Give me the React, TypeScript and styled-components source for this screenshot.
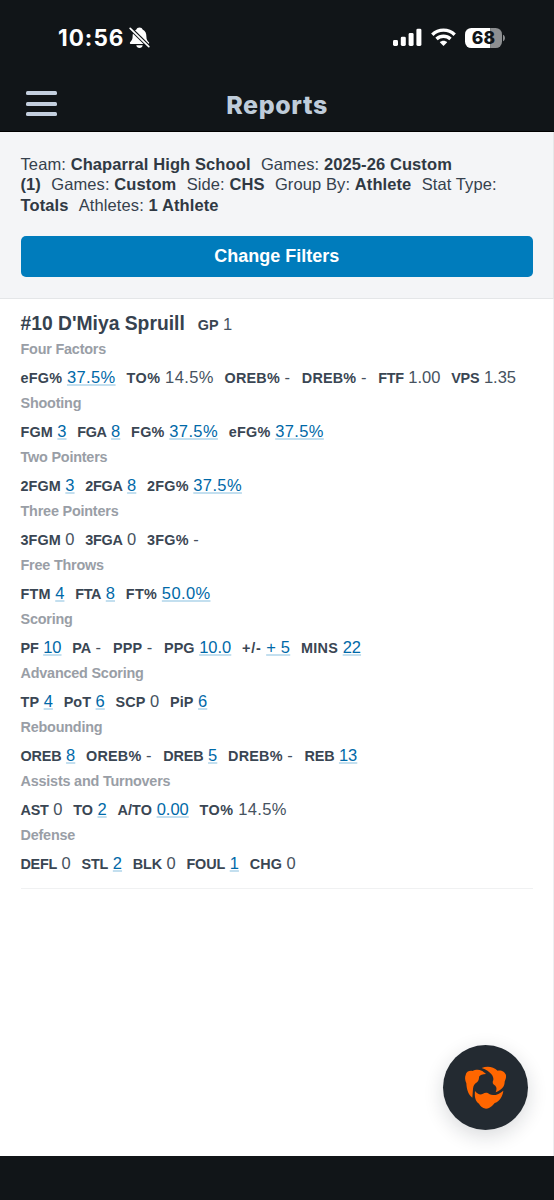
import React from "react";
import styled, { createGlobalStyle } from "styled-components";

const GlobalStyle = createGlobalStyle`
  * { box-sizing: border-box; }
  body { margin: 0; background: #fff; font-family: "Liberation Sans", Arial, sans-serif; }
`;

const Screen = styled.div`
  position: relative;
  display: flex;
  flex-direction: column;
  height: 1200px;
  overflow: hidden;
  background: #fff;
`;

const TopArea = styled.header`
  height: 132px;
  flex: none;
  background: #111518;
  border-bottom: 1px solid #000;
`;

const StatusBar = styled.div`
  display: flex;
  align-items: center;
  height: 75px;
  padding: 0 48px 0 58px;
`;

const Clock = styled.span`
  font: 700 22.5px/28px Inter, sans-serif;
  letter-spacing: 1px;
  width: 67px;
  white-space: nowrap;
  color: #fff;
`;

const StatusIcons = styled.div`
  display: flex;
  align-items: center;
  margin-left: auto;
`;

const BatteryText = styled.text`
  font: 800 17.5px Inter, sans-serif;
`;

const NavBar = styled.div`
  display: grid;
  grid-template-columns: 56px 1fr 56px;
  align-items: center;
  height: 56px;
`;

const MenuButton = styled.button`
  display: flex;
  flex-direction: column;
  justify-content: space-between;
  width: 31px;
  height: 25px;
  margin: 1px 0 0 26px;
  padding: 0;
  border: 0;
  background: none;
`;

const MenuLine = styled.span`
  height: 4px;
  border-radius: 1.5px;
  background: #c4cfde;
`;

const PageTitle = styled.h1`
  margin: 3px 0 0;
  text-align: center;
  font: 800 25px/30px Inter, sans-serif;
  letter-spacing: 0.6px;
  color: #bfccda;
`;

const Filters = styled.section`
  flex: none;
  height: 167px;
  padding: 21.5px 20px 0 20.5px;
  background: #f4f5f7;
  border-bottom: 1px solid #e4e6e8;
  border-right: 1px solid #e6e7e9;
`;

const FilterLine = styled.div`
  display: flex;
  gap: 10.3px;
  height: 20.7px;
  white-space: nowrap;
  font-size: 16.5px;
  letter-spacing: 0.1px;
  line-height: 20.7px;
  color: #36414d;

  b { color: #303943; }
`;

const ChangeButton = styled.button`
  display: block;
  width: 100%;
  height: 41px;
  margin-top: 20px;
  border: 0;
  border-radius: 5px;
  background: #007cbc;
  color: #fff;
  font: 700 18px/41px "Liberation Sans", Arial, sans-serif;
  padding: 0;
`;

const Report = styled.main`
  flex: 1;
  padding: 11.5px 20px 0 20.5px;
  border-right: 1px solid #eeeff1;
`;

const Athlete = styled.div`
  display: flex;
  align-items: baseline;
  gap: 13px;
  height: 28.2px;
  line-height: 25px;
  color: #36424f;
`;

const AthleteName = styled.h2`
  margin: 0;
  font-size: 19.3px;
  line-height: 25px;
`;

const Group = styled.section`
  height: 54.07px;
`;

const GroupTitle = styled.h3`
  margin: 0;
  font-size: 14.4px;
  line-height: 21px;
  letter-spacing: -0.2px;
  color: #999ea6;
`;

const StatRow = styled.div`
  display: flex;
  gap: 10.8px;
  height: 33px;
  line-height: 36px;
  white-space: nowrap;
`;

const Stat = styled.span`
  display: flex;
  align-items: baseline;
  gap: 4.6px;
`;

const StatLabel = styled.span<{ $tracking: number }>`
  font-size: 14.4px;
  font-weight: 700;
  letter-spacing: ${(p) => p.$tracking}em;
  color: #3a4653;
`;

const StatValue = styled.span<{ $linked?: boolean; $tracking: number }>`
  font-size: 16.5px;
  letter-spacing: ${(p) => p.$tracking}em;
  line-height: 18px;
  color: ${(p) => (p.$linked ? "#0069a8" : "#465260")};
  text-decoration: ${(p) => (p.$linked ? "underline 2px #c3dfef" : "none")};
  text-decoration-skip-ink: none;
  text-underline-offset: 1px;
`;

const Divider = styled.div`
  height: 1px;
  margin-top: 8.3px;
  background: #f0f1f2;
`;

const HomeArea = styled.footer`
  flex: none;
  height: 44px;
  background: #111518;
`;

const FloatingButton = styled.button`
  position: absolute;
  right: 26px;
  bottom: 70px;
  display: grid;
  place-items: center;
  width: 85px;
  height: 85px;
  padding: 0;
  border: 0;
  border-radius: 50%;
  background: #232a31;
  box-shadow: 0 6px 20px rgba(20, 25, 35, 0.16);
`;

type StatItem = [label: string, value: string, linked?: boolean];

const groups: { title: string; stats: StatItem[] }[] = [
  { title: "Four Factors", stats: [["eFG%", "37.5%", true], ["TO%", "14.5%"], ["OREB%", "-"], ["DREB%", "-"], ["FTF", "1.00"], ["VPS", "1.35"]] },
  { title: "Shooting", stats: [["FGM", "3", true], ["FGA", "8", true], ["FG%", "37.5%", true], ["eFG%", "37.5%", true]] },
  { title: "Two Pointers", stats: [["2FGM", "3", true], ["2FGA", "8", true], ["2FG%", "37.5%", true]] },
  { title: "Three Pointers", stats: [["3FGM", "0"], ["3FGA", "0"], ["3FG%", "-"]] },
  { title: "Free Throws", stats: [["FTM", "4", true], ["FTA", "8", true], ["FT%", "50.0%", true]] },
  { title: "Scoring", stats: [["PF", "10", true], ["PA", "-"], ["PPP", "-"], ["PPG", "10.0", true], ["+/-", "+ 5", true], ["MINS", "22", true]] },
  { title: "Advanced Scoring", stats: [["TP", "4", true], ["PoT", "6", true], ["SCP", "0"], ["PiP", "6", true]] },
  { title: "Rebounding", stats: [["OREB", "8", true], ["OREB%", "-"], ["DREB", "5", true], ["DREB%", "-"], ["REB", "13", true]] },
  { title: "Assists and Turnovers", stats: [["AST", "0"], ["TO", "2", true], ["A/TO", "0.00", true], ["TO%", "14.5%"]] },
  { title: "Defense", stats: [["DEFL", "0"], ["STL", "2", true], ["BLK", "0"], ["FOUL", "1", true], ["CHG", "0"]] },
];

// Per-letter width corrections, in em, averaged over a word as tracking.
const widthAdjust: Record<string, number> = {
  A: -0.03, B: -0.02, C: 0.019, E: -0.022, F: -0.035, G: -0.019, H: 0.019,
  L: -0.018, M: 0.074, N: 0.019, P: 0.012, S: -0.018, U: 0.019, V: -0.037,
  e: 0.018, "%": 0.111, "-": 0.06, "/": 0.06, "+": 0.04,
};

const trackingFor = (text: string) =>
  [...text].reduce((sum, ch) => sum + (widthAdjust[ch] ?? 0), 0) / text.length;

const StatEntry = ({ label, value, linked }: { label: string; value: string; linked?: boolean }) => (
  <Stat>
    <StatLabel $tracking={trackingFor(label)}>{label}</StatLabel>
    <StatValue $linked={linked} $tracking={trackingFor(value)}>{value}</StatValue>
  </Stat>
);

const SilentBell = () => (
  <svg width="22" height="22" viewBox="0 0 22 22" style={{ marginLeft: 4 }}>
    <path d="M10.5 .6C8.8 .6 7.8 1.4 7.4 2.6C4.6 3.8 3.6 6.5 3.6 9.5C3.6 13 2.1 14 .9 15.5Q.5 17 2 17H19Q20.5 17 20.1 15.5C18.6 14 17.4 13 17.4 9.5C17.4 6.5 16.4 3.8 13.6 2.6C13.2 1.4 12.2 .6 10.5 .6Z" fill="#fff" />
    <path d="M7.3 18.2H13.7C13.4 20 12.2 20.9 10.5 20.9S7.6 20 7.3 18.2Z" fill="#fff" />
    <path d="M1 1L21 20.6" stroke="#111518" strokeWidth="3.8" />
    <path d="M1.2 1.4L19.8 19.6" stroke="#fff" strokeWidth="1.7" strokeLinecap="round" />
  </svg>
);

const Signal = () => (
  <svg width="29" height="19" viewBox="0 0 29 19" fill="#fff">
    <rect x="0" y="12" width="5" height="6" rx="1.4" />
    <rect x="7.8" y="8.7" width="5" height="9.3" rx="1.4" />
    <rect x="15.6" y="5" width="5" height="13" rx="1.4" />
    <rect x="23.4" y="0.7" width="5" height="17.3" rx="1.4" />
  </svg>
);

const Wifi = () => (
  <svg width="25" height="19" viewBox="0 0 25 19" fill="none" stroke="#fff" strokeWidth="3.4" style={{ marginLeft: 9 }}>
    <path d="M1.3 6.7C7.6 .6 17.4 .6 23.7 6.7" />
    <path d="M5.5 11C9.5 7.3 15.5 7.3 19.5 11" />
    <path d="M8.8 14.3C10.8 12.3 14.2 12.3 16.2 14.3L12.5 18Z" fill="#fff" stroke="none" />
  </svg>
);

const Battery = () => (
  <svg width="41" height="20" viewBox="0 0 41 20" style={{ marginLeft: 9 }}>
    <defs>
      <clipPath id="cell"><rect x="0" y="0" width="37" height="20" rx="6.3" /></clipPath>
    </defs>
    <g clipPath="url(#cell)">
      <rect width="25.2" height="20" fill="#fff" />
      <rect x="25.2" width="12" height="20" fill="#8d8f91" />
    </g>
    <path d="M38 6.7C40.6 7.5 40.6 12.5 38 13.3Z" fill="#8d8f91" />
    <BatteryText x="18.4" y="16.3" textAnchor="middle" fill="#111518">68</BatteryText>
  </svg>
);

const HudlLogo = () => (
  <svg width="45" height="45" viewBox="99 105 135 135" fill="#ff6600">
    <path d="M107 135C108 126 118 121 127 123C135 119 146 117 155 122C159 124 164 128 168 132C158 133 150 135 148 139C146 146 148 150 141 157C133 162 130 168 129 176L127 203C116 195 110 180 109 160C105 150 104 142 107 135Z" />
    <path d="M155 114C170 107 190 109 203 122C212 119 226 125 228 136C229 144 226 150 224 155C224 168 218 178 197 187C200 178 201 173 196 167C188 163 186 158 190 150C192 140 183 124 155 114Z" />
    <path d="M135 183C143 194 152 195 159 191C166 186 175 188 179 193C190 199 208 193 220 182C218 200 207 216 194 219C188 226 182 235 168 236C156 234 150 227 147 221C136 214 133 200 135 183Z" />
  </svg>
);

export default function App() {
  return (
    <Screen>
      <GlobalStyle />
      <TopArea>
        <StatusBar>
          <Clock>10:56</Clock>
          <SilentBell />
          <StatusIcons>
            <Signal />
            <Wifi />
            <Battery />
          </StatusIcons>
        </StatusBar>
        <NavBar>
          <MenuButton aria-label="Menu">
            <MenuLine />
            <MenuLine />
            <MenuLine />
          </MenuButton>
          <PageTitle>Reports</PageTitle>
        </NavBar>
      </TopArea>
      <Filters>
        <FilterLine>
          <span>Team: <b>Chaparral High School</b></span>
          <span>Games: <b>2025-26 Custom</b></span>
        </FilterLine>
        <FilterLine>
          <b>(1)</b>
          <span>Games: <b>Custom</b></span>
          <span>Side: <b>CHS</b></span>
          <span>Group By: <b>Athlete</b></span>
          <span>Stat Type:</span>
        </FilterLine>
        <FilterLine>
          <b>Totals</b>
          <span>Athletes: <b>1 Athlete</b></span>
        </FilterLine>
        <ChangeButton>Change Filters</ChangeButton>
      </Filters>
      <Report>
        <Athlete>
          <AthleteName>#10 D'Miya Spruill</AthleteName>
          <StatEntry label="GP" value="1" />
        </Athlete>
        {groups.map((group) => (
          <Group key={group.title}>
            <GroupTitle>{group.title}</GroupTitle>
            <StatRow>
              {group.stats.map(([label, value, linked]) => (
                <StatEntry key={label} label={label} value={value} linked={linked} />
              ))}
            </StatRow>
          </Group>
        ))}
        <Divider />
      </Report>
      <HomeArea />
      <FloatingButton aria-label="Hudl">
        <HudlLogo />
      </FloatingButton>
    </Screen>
  );
}
